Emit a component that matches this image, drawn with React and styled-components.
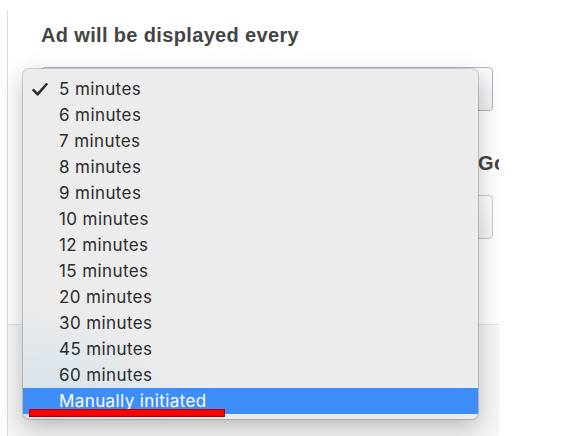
import React from "react";
import styled, { createGlobalStyle } from "styled-components";

const Global = createGlobalStyle`
  html, body { margin: 0; padding: 0; background: #ffffff; }
  body { width: 577px; height: 436px; overflow: hidden; }
`;

const Stage = styled.div`
  position: relative;
  width: 577px;
  height: 436px;
  padding-top: 10px;
  box-sizing: border-box;
`;

const Panel = styled.div`
  width: 491px;
  margin-left: 7px;
  border-left: 1px solid #dcdcdc;
  height: 426px;
  display: flex;
  flex-direction: column;
  overflow: hidden;
  font-family: "Liberation Sans", Arial, sans-serif;
`;

const Content = styled.div`
  padding: 13px 0 85px 33px;
  display: flex;
  flex-direction: column;
  background: #ffffff;
`;

const Heading = styled.div`
  font-size: 20px;
  line-height: 24px;
  font-weight: 700;
  letter-spacing: 0.35px;
  color: #444444;
  white-space: nowrap;
`;

const SelectBox = styled.div`
  margin-top: 20px;
  width: 452px;
  height: 44px;
  box-sizing: border-box;
  border: 1px solid #a8b7c8;
  border-radius: 4px;
  background: linear-gradient(to bottom, #fbfbfb, #f1f1f1);
`;

const LabelRow = styled.div`
  margin-top: 40px;
  display: flex;
  width: 480px;
`;

const Spacer = styled.div`
  flex: 1;
`;

const SideLabel = styled(Heading)`
  width: 43px;
`;

const InputBox = styled.div`
  margin-top: 20px;
  width: 452px;
  height: 44px;
  box-sizing: border-box;
  border: 1px solid #c3cedb;
  border-radius: 4px;
  background: linear-gradient(to bottom, #ffffff, #f3f4f6);
`;

const Footer = styled.div`
  flex: 1;
  border-top: 1px solid #e2e2e2;
  background: #f6f6f6;
`;

const Menu = styled.div`
  position: absolute;
  left: 23px;
  top: 69px;
  width: 455px;
  box-sizing: border-box;
  padding: 7px 0 5px;
  border-radius: 6px;
  background:
    radial-gradient(ellipse 170px 120px at 0% 100%, rgba(205, 222, 234, 0.85), rgba(236, 236, 236, 0) 100%),
    #ececec;
  box-shadow: 0 0 0 1px rgba(0, 0, 0, 0.16), 0 8px 24px rgba(0, 0, 0, 0.26);
  font-family: "Inter", "Liberation Sans", sans-serif;
  overflow: hidden;
`;

const Item = styled.div`
  position: relative;
  height: 26px;
  line-height: 26px;
  padding-left: 36px;
  font-size: 17px;
  letter-spacing: 0.4px;
  color: ${(p) => (p.$active ? "#ffffff" : "#2b2b2b")};
  background: ${(p) => (p.$active ? "#3d8ef9" : "transparent")};
`;

const Check = styled.svg`
  position: absolute;
  left: 9px;
  top: 7px;
  width: 16px;
  height: 13px;
`;

const Marker = styled.div`
  position: absolute;
  left: 29px;
  top: 409px;
  width: 196px;
  height: 8px;
  box-sizing: border-box;
  background: #ff0000;
  border: 1px solid #b30000;
`;

const options = [
  "5 minutes",
  "6 minutes",
  "7 minutes",
  "8 minutes",
  "9 minutes",
  "10 minutes",
  "12 minutes",
  "15 minutes",
  "20 minutes",
  "30 minutes",
  "45 minutes",
  "60 minutes",
  "Manually initiated",
];

export default function App() {
  return (
    <Stage>
      <Global />
      <Panel>
        <Content>
          <Heading>Ad will be displayed every</Heading>
          <SelectBox />
          <LabelRow>
            <Spacer />
            <SideLabel>Go</SideLabel>
          </LabelRow>
          <InputBox />
        </Content>
        <Footer />
      </Panel>
      <Menu>
        {options.map((o, i) => (
          <Item key={o} $active={i === options.length - 1}>
            {i === 0 && (
              <Check viewBox="0 0 16 13">
                <path
                  d="M1.5 7.2 L5.6 11.4 L14.5 1.2"
                  fill="none"
                  stroke="#2b2b2b"
                  strokeWidth="2.5"
                  strokeLinecap="round"
                  strokeLinejoin="round"
                />
              </Check>
            )}
            {o}
          </Item>
        ))}
      </Menu>
      <Marker />
    </Stage>
  );
}
